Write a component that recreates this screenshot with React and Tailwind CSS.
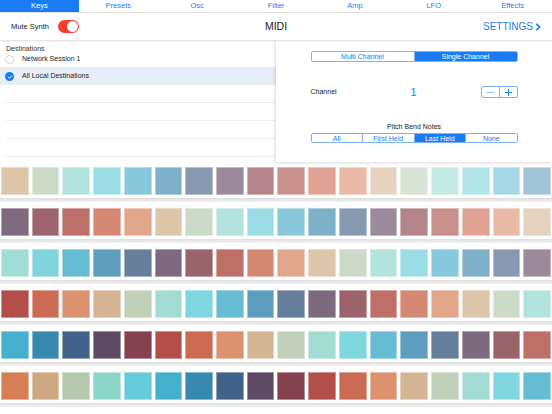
import React from 'react'

const tabs = ['Keys', 'Presets', 'Osc', 'Filter', 'Amp', 'LFO', 'Effects']

const keyRows = [
  ['#dcc5a8', '#ccdac8', '#b2e3dc', '#9adde4', '#88c8dc', '#7fb0ca', '#8799b0', '#9b8a9c', '#b38589', '#c98f8a', '#e0a393', '#e9bba7', '#e5d3bf', '#dae4d6', '#c5ebe5', '#b1e5ea', '#a5d8e6', '#a2c4d7'],
  ['#7f6a80', '#9d646b', '#bd6f68', '#d58874', '#e2a78b', '#dcc5a8', '#ccdac8', '#b2e3dc', '#9adde4', '#88c8dc', '#7fb0ca', '#8799b0', '#9b8a9c', '#b38589', '#c98f8a', '#e0a393', '#e9bba7', '#e5d3bf'],
  ['#a0ddd5', '#80d4de', '#65bcd3', '#5d9dbd', '#677f9c', '#7e6a7f', '#9b646b', '#bd6f68', '#d58874', '#e2a78b', '#dcc5a8', '#ccdac8', '#b2e3dc', '#9adde4', '#88c8dc', '#7fb0ca', '#8799b0', '#9b8a9c'],
  ['#b14f48', '#cc6b53', '#dc9271', '#d6b595', '#c1d1b9', '#a2dcd3', '#7fd6df', '#65bcd3', '#5d9dbd', '#647e9c', '#7e6a7f', '#9b646b', '#bd6f68', '#d58874', '#e2a78b', '#dcc5a8', '#ccdac8', '#b2e3dc'],
  ['#44b0ce', '#3889b0', '#426389', '#5e4a65', '#86414e', '#b14f48', '#cc6b53', '#dc9271', '#d6b595', '#c1d1b9', '#a2dcd3', '#7fd6df', '#65bcd3', '#5d9dbd', '#647e9c', '#7e6a7f', '#9b646b', '#bd6f68'],
  ['#d67f57', '#cda881', '#b5c8ab', '#8cd6c9', '#64ccd8', '#44b0ce', '#3889b0', '#426389', '#5e4a65', '#86414e', '#b14f48', '#cc6b53', '#dc9271', '#d6b595', '#c1d1b9', '#a2dcd3', '#7fd6df', '#65bcd3'],
]

function Segmented({ items, active, className }) {
  return (
    <div className={`flex w-full overflow-hidden rounded-[2px] border border-[#7fb3f7] ${className}`}>
      {items.map((item, i) => (
        <div
          key={item}
          className={`flex flex-1 items-center justify-center text-[7px] leading-none ${
            i > 0 ? 'border-l border-[#7fb3f7]' : ''
          } ${i === active ? 'bg-[#1a7cf5] text-white' : 'bg-white text-[#1a7cf5]'}`}
        >
          {item}
        </div>
      ))}
    </div>
  )
}

export default function App() {
  return (
    <div className="h-[414px] w-[552px] overflow-hidden bg-white font-['Liberation_Sans',Arial,sans-serif] text-[#222]">
      {/* tab bar */}
      <div className="flex h-[13px] border-b border-[#e2e2e2] bg-white">
        {tabs.map((tab, i) => (
          <div
            key={tab}
            className={`flex flex-1 items-center justify-center text-[7.5px] leading-none ${
              i === 0 ? 'bg-[#1a7cf5] text-white' : 'text-[#1a7cf5]'
            }`}
          >
            {tab}
          </div>
        ))}
      </div>

      {/* header */}
      <div className="relative z-10 grid h-[27px] grid-cols-3 items-center bg-white px-[11px] shadow-[0_1px_2px_rgba(0,0,0,0.15)]">
        <div className="flex items-center">
          <span className="text-[7.5px]">Mute Synth</span>
          <div className="ml-[9px] flex h-[13px] w-[21px] items-center justify-end rounded-full bg-[#fe3b30] pr-[1px]">
            <div className="size-[11px] rounded-full bg-white shadow-[0_0_1px_rgba(0,0,0,0.3)]" />
          </div>
        </div>
        <div className="text-center text-[10.5px]">MIDI</div>
        <div className="flex items-center justify-end gap-[2px] text-[10px] text-[#1a7cf5]">
          SETTINGS
          <svg width="6" height="8" viewBox="0 0 6 8">
            <path d="M1.2 0.8 L4.6 4 L1.2 7.2" fill="none" stroke="#1a7cf5" strokeWidth="1.6" />
          </svg>
        </div>
      </div>

      {/* middle */}
      <div className="flex h-[122px]">
        <div className="w-[276px] bg-white">
          <div className="flex h-[12px] items-end pl-[6px] text-[7px] leading-none text-[#333]">Destinations</div>
          <div className="flex h-[16px] items-center gap-[8px] border-b border-[#ececec] pl-[5px] text-[7px]">
            <div className="size-[9px] rounded-full border border-[#d4d4d4]" />
            <span>Network Session 1</span>
          </div>
          <div className="flex h-[17px] items-center gap-[8px] bg-[#e8eef8] pl-[5px] text-[7px]">
            <div className="flex size-[9px] items-center justify-center rounded-full bg-[#1a7cf5]">
              <svg width="6" height="6" viewBox="0 0 6 6">
                <path d="M1 3.1 L2.4 4.4 L5 1.6" fill="none" stroke="white" strokeWidth="1" />
              </svg>
            </div>
            <span>All Local Destinations</span>
          </div>
          {[0, 1, 2, 3].map((i) => (
            <div key={i} className="ml-[6px] h-[18px] border-b border-[#eeeeee]" />
          ))}
        </div>

        <div className="relative w-[276px] bg-white shadow-[-1px_1px_3px_rgba(0,0,0,0.15)]">
          <div className="mx-auto flex w-[207px] flex-col pt-[11px]">
            <Segmented items={['Multi Channel', 'Single Channel']} active={1} className="h-[11px]" />
            <div className="mt-[24px] flex h-[12px] items-center">
              <span className="w-[100px] text-[7px]">Channel</span>
              <span className="text-[11px] text-[#1a7cf5]">1</span>
              <div className="ml-auto flex h-[12px] w-[37px] rounded-[2px] border border-[#7fb3f7]">
                <div className="flex flex-1 items-center justify-center">
                  <div className="h-[1px] w-[7px] bg-[#1a7cf5]/50" />
                </div>
                <div className="relative flex flex-1 items-center justify-center border-l border-[#7fb3f7]">
                  <div className="h-[1px] w-[7px] bg-[#1a7cf5]" />
                  <div className="absolute h-[7px] w-[1px] bg-[#1a7cf5]" />
                </div>
              </div>
            </div>
            <div className="mt-[24px] h-[9px] text-center text-[7px] leading-[9px]">Pitch Bend Notes</div>
            <Segmented items={['All', 'First Held', 'Last Held', 'None']} active={2} className="mt-[2px] h-[10px]" />
          </div>
        </div>
      </div>

      {/* keys */}
      <div className="flex flex-col">
        {keyRows.map((row, r) => (
          <div key={r} className="flex h-[41px] flex-col">
            <div className="mt-[5px] grid h-[28px] grid-cols-[repeat(18,minmax(0,1fr))] gap-[3px] px-[1px]">
              {row.map((c, i) => (
                <div key={i} className="border border-white/40" style={{ backgroundColor: c }} />
              ))}
            </div>
            <div className="mt-[3px] h-[4px] bg-gradient-to-b from-[#dedede] to-[#f3f3f3]" />
          </div>
        ))}
      </div>
    </div>
  )
}
